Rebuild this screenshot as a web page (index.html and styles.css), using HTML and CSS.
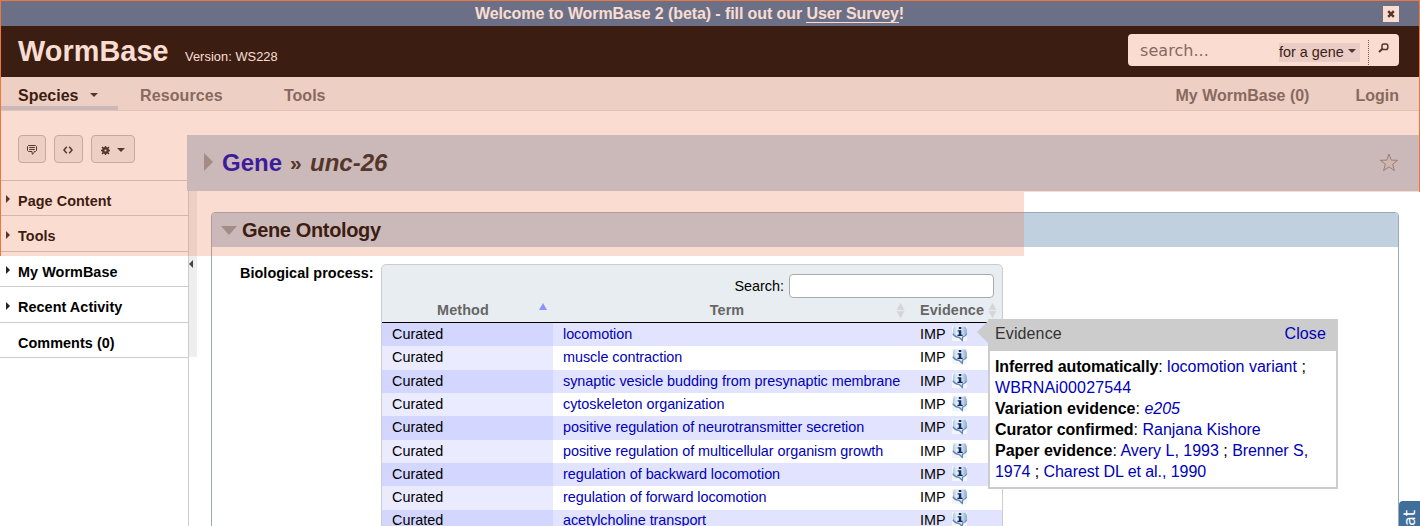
FILE: index.html
```html
<!DOCTYPE html>
<html lang="en">
<head>
<meta charset="utf-8">
<title>WormBase - unc-26</title>
<link rel="stylesheet" href="styles.css">
</head>
<body>
<svg class="defs" width="0" height="0">
  <defs>
    <linearGradient id="bubble" x1="0" y1="0" x2="1" y2="0">
      <stop offset="0" stop-color="#a9c4df"/><stop offset=".3" stop-color="#e6f1fa"/>
      <stop offset=".6" stop-color="#d6e6f5"/><stop offset="1" stop-color="#86a9cf"/>
    </linearGradient>
    <symbol id="info" viewBox="0 0 16 16">
      <rect width="15" height="15" fill="#f3f6f7"/>
      <path d="M2 .5h11.5Q15.3 3 15 6.5 14 10 11 11L10.6 14.5 7 11.5Q1.8 10.8.9 6.8.5 3 2 .5Z" fill="url(#bubble)"/>
      <path d="M.9 7.6Q2.6 11 7 11.3l3.3 3 .3-3.1q3.2-.8 4.2-3.6" fill="none" stroke="#6084b4" stroke-width="1.3"/>
      <path d="M6.8 1h2.5v2H6.8zM5.6 4.2h3.7v4.6h1.3V10H5.4V8.8h1.4V5.4H5.6z" fill="#14295c"/>
    </symbol>
    <symbol id="sort" viewBox="0 0 9 17">
      <path d="M4.5 .3 8.7 8.2H.3zM.3 8.9h8.4l-4.2 7.8z" fill="#d3d5d7" stroke="#eef0f2" stroke-width=".4"/>
    </symbol>
  </defs>
</svg>

<div class="page">
  <div class="banner">
    <p class="banner-text">Welcome to WormBase 2 (beta) - fill out our <a href="#">User Survey</a>!</p>
    <button class="banner-close" aria-label="Close"><svg width="8" height="8" viewBox="0 0 8 8"><path d="M1.2 1.2 6.8 6.8M6.8 1.2 1.2 6.8" stroke="#222" stroke-width="2.5"/></svg></button>
  </div>

  <header class="header">
    <h1 class="logo">WormBase</h1>
    <span class="version">Version: WS228</span>
    <div class="search">
      <span class="search-text">search...</span>
      <span class="search-type">for a gene <i class="caret"></i></span>
      <span class="search-go"><svg width="11" height="10" viewBox="0 0 11 10"><rect x="4" y="1" width="5.8" height="5.5" rx="1.8" fill="none" stroke="#222" stroke-width="1.5"/><path d="M4.5 5.7 1 8.9" stroke="#222" stroke-width="2"/></svg></span>
    </div>
  </header>

  <nav class="nav">
    <a class="tab tab-active">Species <i class="caret"></i></a>
    <a class="tab tab-resources">Resources</a>
    <a class="tab tab-tools">Tools</a>
    <a class="tab tab-user">My WormBase (0)</a>
    <a class="tab tab-login">Login</a>
  </nav>

  <div class="main">
    <aside class="side">
      <div class="tools">
        <span class="tool tool-comment"><svg width="10" height="10" viewBox="0 0 10 10"><path d="M1.5.5h7l1 1v4l-1 1H7.2v1L5.3 9.3 5 6.5H1.5l-1-1v-4zM2.2 2.5h5.6M2.2 4.5h5.6" fill="none" stroke="#222" stroke-width="1"/></svg></span>
        <span class="tool tool-code"><svg width="10" height="8" viewBox="0 0 10 8"><path d="M3.8.8.9 4l2.9 3.2M6.2.8 9.1 4 6.2 7.2" fill="none" stroke="#222" stroke-width="1.5"/></svg></span>
        <span class="tool tool-gear"><svg width="9" height="9" viewBox="0 0 9 9"><path d="M4.5 0v9M0 4.5h9M1 1l7 7M8 1 1 8" stroke="#222" stroke-width="1.4"/><circle cx="4.5" cy="4.5" r="2.4" fill="none" stroke="#222" stroke-width="2"/><circle cx="4.5" cy="4.5" r="1.1" fill="#eee"/></svg><i class="caret"></i></span>
      </div>
      <ul class="menu">
        <li><i class="arrow"></i>Page Content</li>
        <li><i class="arrow"></i>Tools</li>
        <li><i class="arrow"></i>My WormBase</li>
        <li><i class="arrow"></i>Recent Activity</li>
        <li>Comments (0)</li>
      </ul>
    </aside>

    <section class="content">
      <div class="title">
        <i class="title-arrow"></i>
        <h2><a href="#">Gene</a><span class="sep">»</span><em>unc-26</em></h2>
        <svg class="star" width="20" height="19" viewBox="0 0 20 19"><path d="M10 1l2.2 6.1 6.4.2-5 4 1.8 6.3L10 13.9l-5.4 3.7 1.8-6.3-5-4 6.4-.2z" fill="#c9cdd2" stroke="#7b8289" stroke-width="1"/></svg>
      </div>
      <div class="body">
        <div class="handle"><i></i></div>
        <div class="widget">
          <div class="widget-head"><i class="down"></i><h3>Gene Ontology</h3></div>
          <div class="field">
            <b class="label">Biological process:</b>
            <div class="table">
              <div class="filter"><label for="q">Search:</label><input id="q" type="text"></div>
              <div class="row head">
                <span>Method<i class="asc"></i></span>
                <span>Term<svg width="9" height="17"><use href="#sort"/></svg></span>
                <span>Evidence<svg width="9" height="17"><use href="#sort"/></svg></span>
              </div>
              <div class="row"><span>Curated</span><span><a href="#">locomotion</a></span><span>IMP <svg class="info" width="16" height="16"><use href="#info"/></svg></span></div>
              <div class="row"><span>Curated</span><span><a href="#">muscle contraction</a></span><span>IMP <svg class="info" width="16" height="16"><use href="#info"/></svg></span></div>
              <div class="row"><span>Curated</span><span><a href="#">synaptic vesicle budding from presynaptic membrane</a></span><span>IMP <svg class="info" width="16" height="16"><use href="#info"/></svg></span></div>
              <div class="row"><span>Curated</span><span><a href="#">cytoskeleton organization</a></span><span>IMP <svg class="info" width="16" height="16"><use href="#info"/></svg></span></div>
              <div class="row"><span>Curated</span><span><a href="#">positive regulation of neurotransmitter secretion</a></span><span>IMP <svg class="info" width="16" height="16"><use href="#info"/></svg></span></div>
              <div class="row"><span>Curated</span><span><a href="#">positive regulation of multicellular organism growth</a></span><span>IMP <svg class="info" width="16" height="16"><use href="#info"/></svg></span></div>
              <div class="row"><span>Curated</span><span><a href="#">regulation of backward locomotion</a></span><span>IMP <svg class="info" width="16" height="16"><use href="#info"/></svg></span></div>
              <div class="row"><span>Curated</span><span><a href="#">regulation of forward locomotion</a></span><span>IMP <svg class="info" width="16" height="16"><use href="#info"/></svg></span></div>
              <div class="row last"><span>Curated</span><span><a href="#">acetylcholine transport</a></span><span>IMP <svg class="info" width="16" height="16"><use href="#info"/></svg></span></div>
            </div>
          </div>
        </div>
      </div>
    </section>
  </div>

  <div class="tip">
    <div class="tip-head"><span>Evidence</span><a href="#">Close</a></div>
    <div class="tip-body">
      <b class="tight">Inferred automatically</b>: <a href="#">locomotion variant</a> ;<br><a class="wide" href="#">WBRNAi00027544</a><br>
      <b>Variation evidence</b>: <a href="#"><em>e205</em></a><br>
      <b class="snug">Curator confirmed</b>: <a href="#">Ranjana Kishore</a><br>
      <b>Paper evidence</b>: <a href="#">Avery L, 1993</a> ;<span class="snug"> <a href="#">Brenner S,<br>1974</a> ; <a href="#">Charest DL et al., 1990</a></span>
    </div>
  </div>

  <div class="chat">chat</div>
  <div class="shade shade-top"></div>
  <div class="shade shade-low"></div>
</div>
</body>
</html>
```
FILE: styles.css
```css
* { box-sizing: border-box; }
body { margin: 0; font: 14.4px "Liberation Sans", Arial, sans-serif; color: #000; background: #fff; }
a { color: #0000b8; text-decoration: none; }
h1, h2, h3, p, ul { margin: 0; padding: 0; }
.defs { display: block; position: absolute; }
.page { position: relative; width: 1420px; height: 526px; overflow: hidden; display: flex; flex-direction: column; }
.caret { display: inline-block; border: solid transparent; border-width: 4px 4px 0; border-top-color: #222; }

.banner { flex: none; height: 26px; display: flex; align-items: center; background: #416f9b; color: #fff; padding: 1px 21px 0 0; }
.banner-text { flex: 1; padding-right: 4px; text-align: center; font-size: 16px; font-weight: bold; line-height: 25px; letter-spacing: -.09px; }
.banner-text a { color: #fff; font-weight: bold; border-bottom: 1px solid #fff; line-height: 16px; display: inline-block; height: 17px; }
.banner-close { width: 16px; height: 16px; margin-top: 1px; padding: 0; border: 0; background: #fff; display: flex; align-items: center; justify-content: center; }

.header { flex: none; height: 51px; display: flex; align-items: flex-start; padding: 0 21px 0 18px; background: #000; color: #fff; }
.logo { width: 167px; font-size: 28.8px; line-height: 50px; letter-spacing: .1px; }
.version { font-size: 12.8px; line-height: 62px; letter-spacing: .07px; }
.search { margin: 8px 0 0 auto; width: 271px; height: 32px; border-radius: 4px; background: #fff; display: flex; }
.search-text { width: 151px; padding-left: 12px; color: #666; font: 16px/34px "DejaVu Sans", sans-serif; letter-spacing: .05px; }
.search-type { width: 81px; height: 19px; margin-top: 9px; background: #e8ebf0; color: #000; font-size: 14.4px; line-height: 19px; white-space: nowrap; }
.search-type .caret { margin-bottom: 4px; }
.search-go { margin: 6px 0 0 8px; padding: 3px 0 0 9px; height: 25px; border-left: 1px dotted #555; }
.search-go svg { display: block; }

.nav { flex: none; height: 34px; display: flex; background: #eee; border-bottom: 1px solid #ddd; font-size: 16px; font-weight: bold; line-height: 37px; }
.tab { color: #666; }
.tab-active { width: 118px; height: 33px; padding-left: 18px; color: #000; border-bottom: 4px solid #c1d0df; }
.tab-active .caret { margin: 0 0 4px 7px; }
.tab-resources { margin-left: 22px; width: 144px; letter-spacing: .1px; }
.tab-user { margin-left: auto; margin-right: 46px; }
.tab-login { margin-right: 21px; }

.main { flex: 1; display: flex; padding-top: 24px; min-height: 0; }
.side { width: 187px; flex: none; }
.tools { display: flex; gap: 8px; padding-left: 18px; height: 45px; }
.tool { height: 28px; border: 1px solid #bbb; border-radius: 4px; background: #eee; display: flex; align-items: center; justify-content: center; padding-top: 2px; }
.tool-comment { width: 28px; }
.tool-code { width: 29px; padding-right: 1px; }
.tool-gear { width: 44px; gap: 7px; }
.menu { list-style: none; width: 188px; border-top: 1px solid #ccc; }
.menu li { display: flex; align-items: center; height: 35.4px; padding: 5.6px 0 0 18px; border-bottom: 1px solid #ccc; font-weight: bold; letter-spacing: .06px; }
.arrow { width: 4px; height: 8px; margin: -3px 8px 0 -12px; border: solid transparent; border-width: 4px 0 4px 4px; border-left-color: #222; }

.content { flex: 1; min-width: 0; display: flex; flex-direction: column; }
.title { flex: none; height: 56px; background: #c1d0df; display: flex; padding-left: 17px; }
.title-arrow { width: 9px; height: 18px; margin: 18px 9px 0 0; border: solid transparent; border-width: 9px 0 9px 9px; border-left-color: #8b939b; }
.title h2 { display: flex; font-size: 24px; line-height: 55px; color: #222; }
.title .sep { width: 28px; padding-left: 8px; font-size: 21px; }
.star { margin: 18px 21px 0 auto; }
.body { flex: 1; display: flex; margin-left: 1px; border-left: 1px solid #ccc; }
.handle { width: 8px; height: 166px; background: #eee; padding-top: 69px; }
.handle i { display: block; width: 4px; border: solid transparent; border-width: 4px 4px 4px 0; border-right-color: #444; }
.widget { margin: 21px 0 0 14px; width: 1188px; height: 400px; border: 1px solid #9aabb8; border-radius: 4px 4px 0 0; }
.widget-head { height: 34px; display: flex; background: #c1d0df; border-radius: 3px 3px 0 0; padding-left: 9px; }
.widget-head h3 { font-size: 20px; line-height: 34px; letter-spacing: -.36px; }
.down { height: 9px; margin: 13px 5px 0 0; border: solid transparent; border-width: 9px 8px 0; border-top-color: #8b939b; }
.field { display: flex; padding: 17px 0 0 28px; }
.label { width: 141px; line-height: 18px; letter-spacing: .05px; }
.table { width: 622px; height: 300px; border: 1px solid #ccc; border-radius: 5px 5px 0 0; background: #e8edf1; }
.filter { height: 33px; padding: 9px 8px 0 0; display: flex; justify-content: flex-end; gap: 5px; line-height: 25px; }
.filter input { width: 205px; height: 24px; border: 1px solid #aaa; border-radius: 4px; background: #fff; }
.row { display: grid; grid-template-columns: 171px 357px 92px; height: 23.333px; line-height: 23px; }
.row > span { padding-left: 10px; background: #fff; white-space: nowrap; }
.row > span:first-child { background: #eaebff; }
.row:nth-child(odd) > span { background: #e2e4ff; }
.row:nth-child(odd) > span:first-child { background: #d3d6ff; }
.row a { letter-spacing: -.04px; }
.row.last { line-height: 21px; }
.row.head { height: 25px; line-height: 24px; border-bottom: 1px solid #000; }
.row.head > span { background: none; color: #666; font-weight: bold; display: flex; justify-content: center; padding: 0; position: relative; letter-spacing: .1px; }
.row.head > span:first-child { padding-right: 9px; background: none; }
.row.head > span:nth-child(2) { padding-right: 9px; }
.row.head > span:nth-child(3) { padding-right: 8px; }
.row.head svg { position: absolute; right: 5px; top: 4px; }
.asc { position: absolute; right: 6px; top: 5px; border: solid transparent; border-width: 0 4px 7px; border-bottom-color: #8d92ff; }
.info { vertical-align: -3px; margin-left: 3px; }

.tip { position: absolute; left: 988px; top: 319px; width: 350px; height: 170px; border: 2px solid #ccc; background: #fff; font-size: 16px; }
.tip::before { content: ""; position: absolute; left: -13px; top: -1px; border: solid transparent; border-width: 12px 12px 12px 0; border-right-color: #ccc; }
.tip-head { display: flex; justify-content: space-between; height: 30px; padding: 0 10px 0 5px; background: #ccc; color: #333; line-height: 26px; letter-spacing: .12px; }
.tip-body { padding: 5px 0 0 5px; line-height: 21px; white-space: nowrap; }
.tight { letter-spacing: -.14px; }
.snug { letter-spacing: -.06px; }
.wide { letter-spacing: .15px; }
.chat { position: absolute; left: 1399px; top: 501px; width: 22px; height: 60px; padding: 0 0 9px; border-radius: 0 0 4px 0; background: #416f9b; color: #fff; font: 16px/22px "DejaVu Sans", sans-serif; text-align: end; writing-mode: vertical-rl; transform: rotate(180deg); }

.shade { position: absolute; pointer-events: none; background: rgba(236, 115, 72, .25); border: 0 solid #f0763f; }
.shade-top { left: 0; top: 0; width: 1420px; height: 192px; border-width: 1px 1px 0; }
.shade-low { left: 0; top: 192px; width: 1024px; height: 64px; border-left-width: 1px; }
```
